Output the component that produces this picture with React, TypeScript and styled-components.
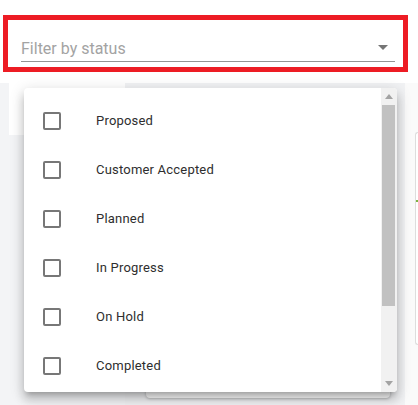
import React from "react";
import styled, { createGlobalStyle } from "styled-components";

const Global = createGlobalStyle`
  html, body { margin: 0; padding: 0; background: #ffffff; }
  body { font-family: Roboto, "Liberation Sans", sans-serif; width: 418px; height: 405px; overflow: hidden; }
  * { box-sizing: border-box; }
`;

const Page = styled.div`
  position: relative;
  width: 418px;
  height: 405px;
  display: flex;
  flex-direction: column;
  background: #ffffff;
`;

const Header = styled.div`
  height: 83px;
  padding: 15px 0 0 3px;
  background: #ffffff;
`;

const FilterBox = styled.div`
  width: 405px;
  height: 57px;
  border: 5px solid #ed1c24;
  padding: 19px 8px 0 13px;
`;

const Field = styled.div`
  display: flex;
  align-items: flex-start;
  border-bottom: 1px solid #949494;
  padding-bottom: 3px;
`;

const Placeholder = styled.div`
  flex: 1;
  font-size: 16px;
  line-height: 19px;
  color: #a3a3a3;
  letter-spacing: 0;
`;

const Arrow = styled.svg`
  width: 24px;
  height: 24px;
  margin-top: -4px;
  margin-bottom: -1px;
  fill: #757575;
`;

const Content = styled.div`
  flex: 1;
  display: flex;
  background: #f3f4f6;
`;

const LeftCol = styled.div`
  width: 125px;
  padding-left: 9px;
`;

const LeftPanel = styled.div`
  height: 52px;
  background: #ffffff;
`;

const MidCol = styled.div`
  width: 280px;
  display: flex;
  flex-direction: column;
  justify-content: flex-end;
  padding: 0 15px 7px 21px;
  background: #f1f2f4;
`;

const BottomCard = styled.div`
  height: 40px;
  background: #ffffff;
  border-radius: 0 0 4px 4px;
  box-shadow: 0 1px 3px rgba(0, 0, 0, 0.25);
`;

const RightCol = styled.div`
  flex: 1;
  display: flex;
  padding: 49px 0 0 10px;
  background: #fafafa;
`;

const RightCard = styled.div`
  position: relative;
  flex: 1;
  height: 213px;
  background: #ffffff;
  border: 1px solid #dddddd;
  border-right: none;
  border-radius: 4px 0 0 4px;
`;

const GreenTick = styled.div`
  position: absolute;
  left: 0;
  top: 67px;
  width: 4px;
  height: 2px;
  background: #7cb342;
`;

const Menu = styled.div`
  position: absolute;
  left: 24px;
  top: 88px;
  width: 373px;
  height: 304px;
  display: flex;
  background: #ffffff;
  border-radius: 4px;
  overflow: hidden;
  box-shadow: 0px 5px 5px -3px rgba(0, 0, 0, 0.2), 0px 8px 10px 1px rgba(0, 0, 0, 0.14),
    0px 3px 14px 2px rgba(0, 0, 0, 0.12);
`;

const List = styled.ul`
  flex: 1;
  margin: 0;
  padding: 8px 0;
  list-style: none;
  overflow: hidden;
`;

const Item = styled.li`
  height: 49px;
  display: flex;
  align-items: center;
  padding-left: 19px;
  gap: 35px;
`;

const Box = styled.span`
  width: 18px;
  height: 18px;
  border: 2px solid #777777;
  border-radius: 2px;
  flex: none;
`;

const Label = styled.span`
  font-size: 13px;
  font-weight: 400;
  color: #2e2e2e;
  letter-spacing: 0.2px;
`;

const Scrollbar = styled.div`
  width: 16px;
  display: flex;
  flex-direction: column;
  background: #f1f1f1;
`;

const ScrollBtn = styled.div`
  height: 17px;
  display: flex;
  align-items: center;
  justify-content: center;
`;

const Thumb = styled.div`
  height: 201px;
  margin: 0 2px 0 1px;
  background: #c1c1c1;
`;

const Track = styled.div`
  flex: 1;
`;

const Tri = styled.svg`
  width: 8px;
  height: 5px;
  fill: #a3a3a3;
`;

const statuses = ["Proposed", "Customer Accepted", "Planned", "In Progress", "On Hold", "Completed"];

export default function App() {
  return (
    <>
      <Global />
      <Page>
        <Header>
          <FilterBox>
            <Field>
              <Placeholder>Filter by status</Placeholder>
              <Arrow viewBox="0 0 24 24">
                <path d="M7 10l5 5 5-5z" />
              </Arrow>
            </Field>
          </FilterBox>
        </Header>
        <Content>
          <LeftCol>
            <LeftPanel />
          </LeftCol>
          <MidCol>
            <BottomCard />
          </MidCol>
          <RightCol>
            <RightCard>
              <GreenTick />
            </RightCard>
          </RightCol>
        </Content>
        <Menu>
          <List>
            {statuses.map((s) => (
              <Item key={s}>
                <Box />
                <Label>{s}</Label>
              </Item>
            ))}
          </List>
          <Scrollbar>
            <ScrollBtn>
              <Tri viewBox="0 0 8 5">
                <path d="M0 5L4 0L8 5z" />
              </Tri>
            </ScrollBtn>
            <Thumb />
            <Track />
            <ScrollBtn>
              <Tri viewBox="0 0 8 5">
                <path d="M0 0L8 0L4 5z" />
              </Tri>
            </ScrollBtn>
          </Scrollbar>
        </Menu>
      </Page>
    </>
  );
}
